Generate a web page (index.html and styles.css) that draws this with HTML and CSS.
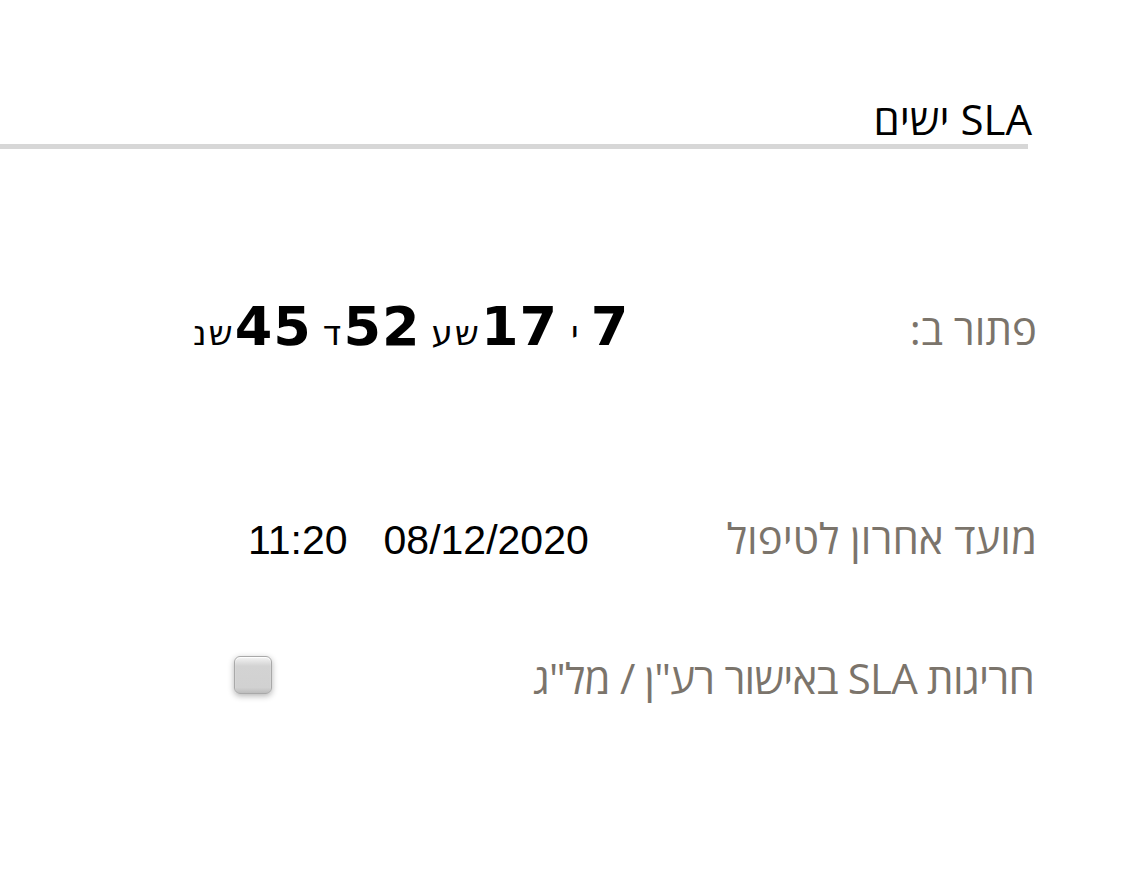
FILE: index.html
```html
<!DOCTYPE html>
<html lang="he" dir="rtl">
<head>
<meta charset="utf-8">
<title>SLA</title>
<link rel="stylesheet" href="styles.css">
</head>
<body>
<div class="page">
  <header class="head">
    <h2 class="title">SLA ישים</h2>
    <div class="rule"></div>
  </header>

  <div class="row row-timer">
    <div class="label">פתור ב:</div>
    <div class="timer">
      <span class="num">7</span><span class="unit sp">י</span><span class="num">17</span><span class="unit">שע</span><span class="num">52</span><span class="unit">ד</span><span class="num">45</span><span class="unit last">שנ</span>
    </div>
  </div>

  <div class="row row-date">
    <div class="label">מועד אחרון לטיפול</div>
    <div class="datetime">
      <span class="date">08/12/2020</span>
      <span class="time">11:20</span>
    </div>
  </div>

  <div class="row row-check">
    <div class="label label-tight">חריגות SLA באישור רע"ן / מל"ג</div>
    <div class="check-wrap"><span class="checkbox"></span></div>
  </div>
</div>
</body>
</html>
```

FILE: styles.css
```css
html, body {
  margin: 0;
  padding: 0;
  background: #ffffff;
}
body {
  font-family: "Open Sans", "Noto Sans", sans-serif;
  direction: rtl;
  color: #000;
}
.page {
  width: 1138px;
  padding-top: 94px;
}
.head {
  display: flex;
  flex-direction: column;
}
.title {
  margin: 0 106px 0 0;
  font-weight: normal;
  font-size: 42px;
  line-height: 50px;
}
.rule {
  height: 5px;
  background: #d7d7d7;
  margin: 0 110px 0 0;
}
.row {
  display: flex;
  align-items: baseline;
  justify-content: space-between;
  margin-right: 101px;
}
.label {
  flex: none;
  white-space: nowrap;
  color: #7b746b;
  font-size: 42px;
  line-height: 50px;
}
.label-tight {
  letter-spacing: -0.8px;
  margin-right: 3px;
}
.row-timer {
  margin-top: 148px;
  padding-left: 193px;
}
.timer {
  display: flex;
  align-items: baseline;
  font-family: "DejaVu Sans", sans-serif;
}
.num {
  font-weight: bold;
  font-size: 54px;
  line-height: 60px;
  letter-spacing: 1px;
}
.unit {
  font-size: 34px;
  letter-spacing: 2px;
  margin-left: 11px;
}
.unit.sp { margin-right: 10px; margin-left: 13px; }
.unit.last { margin-left: 0; }
.row-date {
  margin-top: 156px;
  padding-left: 248px;
}
.datetime {
  display: flex;
  gap: 36px;
  font-family: "Liberation Sans", Arial, sans-serif;
  font-size: 41px;
}
.row-check {
  margin-top: 89px;
  padding-left: 234px;
}
.check-wrap { display: flex; }
.checkbox {
  display: block;
  width: 36px;
  height: 36px;
  border-radius: 6px;
  border: 1px solid #a9a9a9;
  background: linear-gradient(#f4f4f4, #d3d3d3 25%, #d1d1d1 85%, #bdbdbd);
  box-shadow: 0 2px 6px rgba(0,0,0,0.3), inset 0 1px 1px #ffffff;
}
```
